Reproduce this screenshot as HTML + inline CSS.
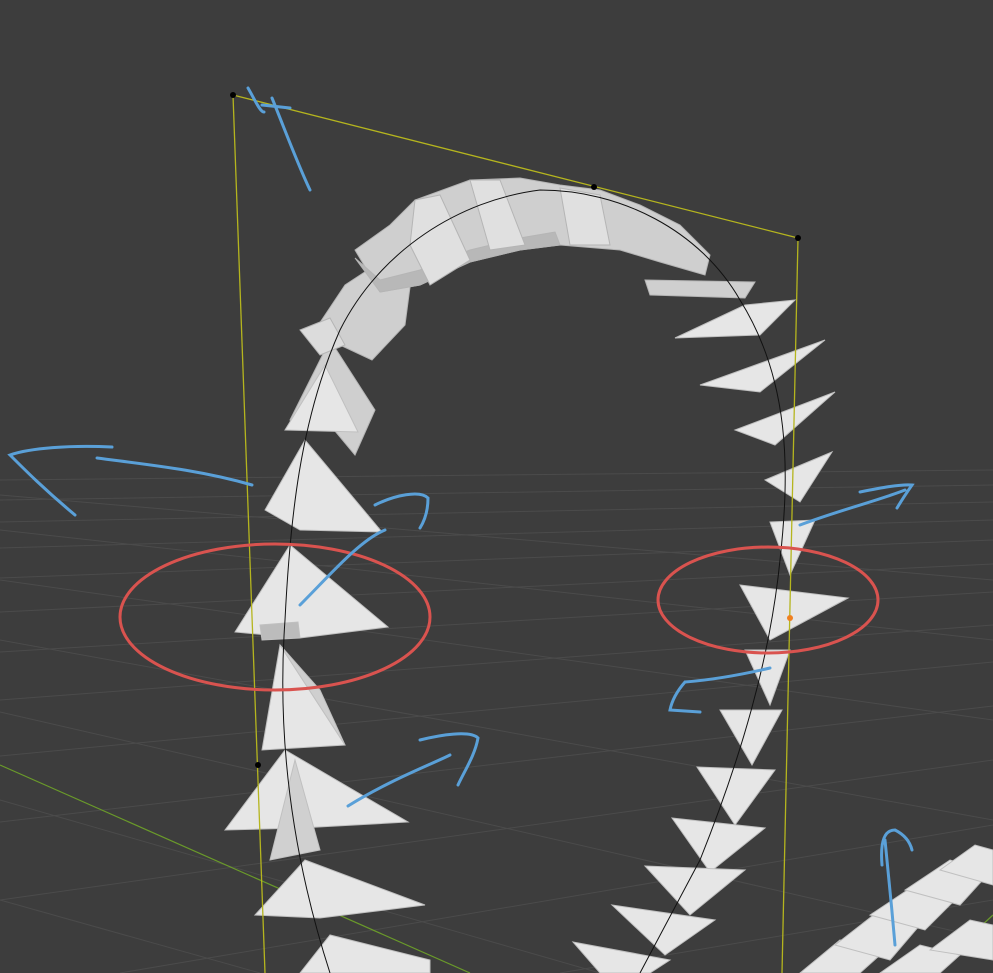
<!DOCTYPE html>
<html><head><style>html,body{margin:0;padding:0;background:#3d3d3d;}svg{display:block}</style></head>
<body>
<svg width="993" height="973" viewBox="0 0 993 973" xmlns="http://www.w3.org/2000/svg">
<rect width="993" height="973" fill="#3d3d3d"/>
<g stroke="#4b4b4b" stroke-width="1" fill="none">
<line x1="0" y1="480" x2="993" y2="470"/><line x1="0" y1="500" x2="993" y2="485"/>
<line x1="0" y1="522" x2="993" y2="502"/><line x1="0" y1="548" x2="993" y2="520"/>
<line x1="0" y1="578" x2="993" y2="540"/><line x1="0" y1="612" x2="993" y2="564"/>
<line x1="0" y1="652" x2="993" y2="592"/><line x1="0" y1="700" x2="993" y2="625"/>
<line x1="0" y1="756" x2="993" y2="662"/><line x1="0" y1="822" x2="993" y2="706"/>
<line x1="0" y1="900" x2="993" y2="760"/><line x1="120" y1="973" x2="993" y2="825"/>
<line x1="560" y1="973" x2="993" y2="900"/>
<line x1="0" y1="530" x2="993" y2="640"/><line x1="0" y1="580" x2="993" y2="720"/>
<line x1="0" y1="640" x2="993" y2="820"/><line x1="0" y1="712" x2="993" y2="940"/>
<line x1="0" y1="800" x2="600" y2="973"/><line x1="0" y1="495" x2="993" y2="580"/>
<line x1="0" y1="900" x2="260" y2="973"/>
</g>
<line x1="0" y1="765" x2="470" y2="973" stroke="#6a9a2a" stroke-width="1.2"/>
<line x1="930" y1="973" x2="993" y2="915" stroke="#6a9a2a" stroke-width="1.2"/>
<g fill="#cfcfcf" stroke="#b5b5b5" stroke-width="1">
<polygon points="315,330 345,285 380,262 412,272 405,325 372,360 340,345"/>
<polygon points="355,250 390,225 415,200 470,180 520,178 560,185 600,190 640,205 680,225 710,255 705,275 660,262 620,250 560,245 520,250 470,262 420,285 380,292"/>
<polygon points="355,258 380,292 420,285 470,262 520,250 560,245 555,232 520,238 470,250 420,270 380,280" fill="#b8b8b8"/>
<polygon points="415,200 440,195 470,260 430,285 410,245" fill="#e0e0e0"/>
<polygon points="470,180 500,180 525,245 490,250" fill="#e0e0e0"/>
<polygon points="560,188 600,195 610,245 570,245" fill="#e0e0e0"/>
<polygon points="645,280 755,282 745,298 650,295"/>
<polygon points="290,420 330,340 375,410 355,455 330,425"/>
<polygon points="300,330 330,318 345,345 320,355" fill="#dcdcdc"/>
</g>
<g fill="#e6e6e6" stroke="#c0c0c0" stroke-width="1">
<polygon points="235,632 290,545 388,627 300,638"/>
<polygon points="262,640 300,638 298,622 260,625" fill="#bcbcbc"/>
<polygon points="265,510 305,440 382,532 300,530"/>
<polygon points="262,750 280,645 345,745"/>
<polygon points="280,645 345,745 320,690" fill="#cfcfcf"/>
<polygon points="225,830 285,750 408,822 300,828"/>
<polygon points="270,860 295,760 320,850" fill="#d0d0d0"/>
<polygon points="255,915 305,860 425,905 320,918"/>
<polygon points="300,973 330,935 430,960 430,973"/>
<polygon points="285,430 325,365 358,432"/>
<polygon points="675,338 745,305 795,300 760,335"/>
<polygon points="700,385 825,340 760,392"/>
<polygon points="735,430 835,392 775,445"/>
<polygon points="765,480 832,452 800,502"/>
<polygon points="770,522 815,520 790,575"/>
<polygon points="740,585 848,598 770,640"/>
<polygon points="745,650 790,650 770,705"/>
<polygon points="720,710 782,710 752,765"/>
<polygon points="697,767 775,770 735,825"/>
<polygon points="672,818 765,828 710,872"/>
<polygon points="645,866 745,870 690,915"/>
<polygon points="612,905 715,920 665,955"/>
<polygon points="573,942 670,960 650,973 600,973"/>
<polygon points="800,973 840,940 880,955 860,973"/>
<polygon points="835,945 880,910 920,925 890,960"/>
<polygon points="870,915 915,885 955,900 925,930"/>
<polygon points="905,890 950,860 990,872 960,905"/>
<polygon points="940,870 975,845 993,850 993,885"/>
<polygon points="880,973 920,945 960,955 940,973"/>
<polygon points="930,950 970,920 993,925 993,960"/>
</g>
<g stroke="#111" stroke-width="1" fill="none">
<path d="M330,973 C300,880 275,760 285,620 C290,520 300,420 340,330 C380,250 460,200 540,190 C620,190 700,230 740,300 C790,380 790,470 780,560 C770,660 740,760 700,860 L640,973"/>
</g>
<g stroke="#b5b51e" stroke-width="1.3" fill="none">
<line x1="233" y1="95" x2="798" y2="238"/>
<line x1="233" y1="95" x2="265" y2="973"/>
<line x1="798" y1="238" x2="782" y2="973"/>
</g>
<g fill="#000"><circle cx="233" cy="95" r="3"/><circle cx="798" cy="238" r="3"/><circle cx="594" cy="187" r="3"/><circle cx="258" cy="765" r="3"/></g>
<circle cx="790" cy="618" r="3" fill="#f08020"/>
<g stroke="#d9534f" stroke-width="3" fill="none">
<ellipse cx="275" cy="617" rx="155" ry="73"/>
<ellipse cx="768" cy="600" rx="110" ry="53"/>
</g>
<g stroke="#5aa0d8" stroke-width="3" fill="none" stroke-linecap="round">
<path d="M248,88 C255,100 260,112 264,112 M262,105 L290,108 M272,98 C285,130 298,165 310,190"/>
<path d="M112,447 C70,445 30,448 10,455 C25,470 45,490 75,515"/>
<path d="M97,458 C150,465 200,470 252,485"/>
<path d="M300,605 C330,575 360,540 385,530 M375,505 C395,495 420,490 428,498 C428,510 425,520 420,528"/>
<path d="M348,806 C390,780 430,765 450,755 M420,740 C440,735 470,730 478,738 C475,755 465,770 458,785"/>
<path d="M800,525 C840,510 880,500 905,490 M860,492 C880,488 900,484 912,485 C905,495 900,503 897,508"/>
<path d="M770,668 C740,675 710,680 685,682 C678,690 672,700 670,710 L700,712"/>
<path d="M895,945 C892,910 888,870 885,840 M882,865 C880,840 885,830 895,830 C905,835 910,842 912,850"/>
</g>
</svg>
</body></html>
